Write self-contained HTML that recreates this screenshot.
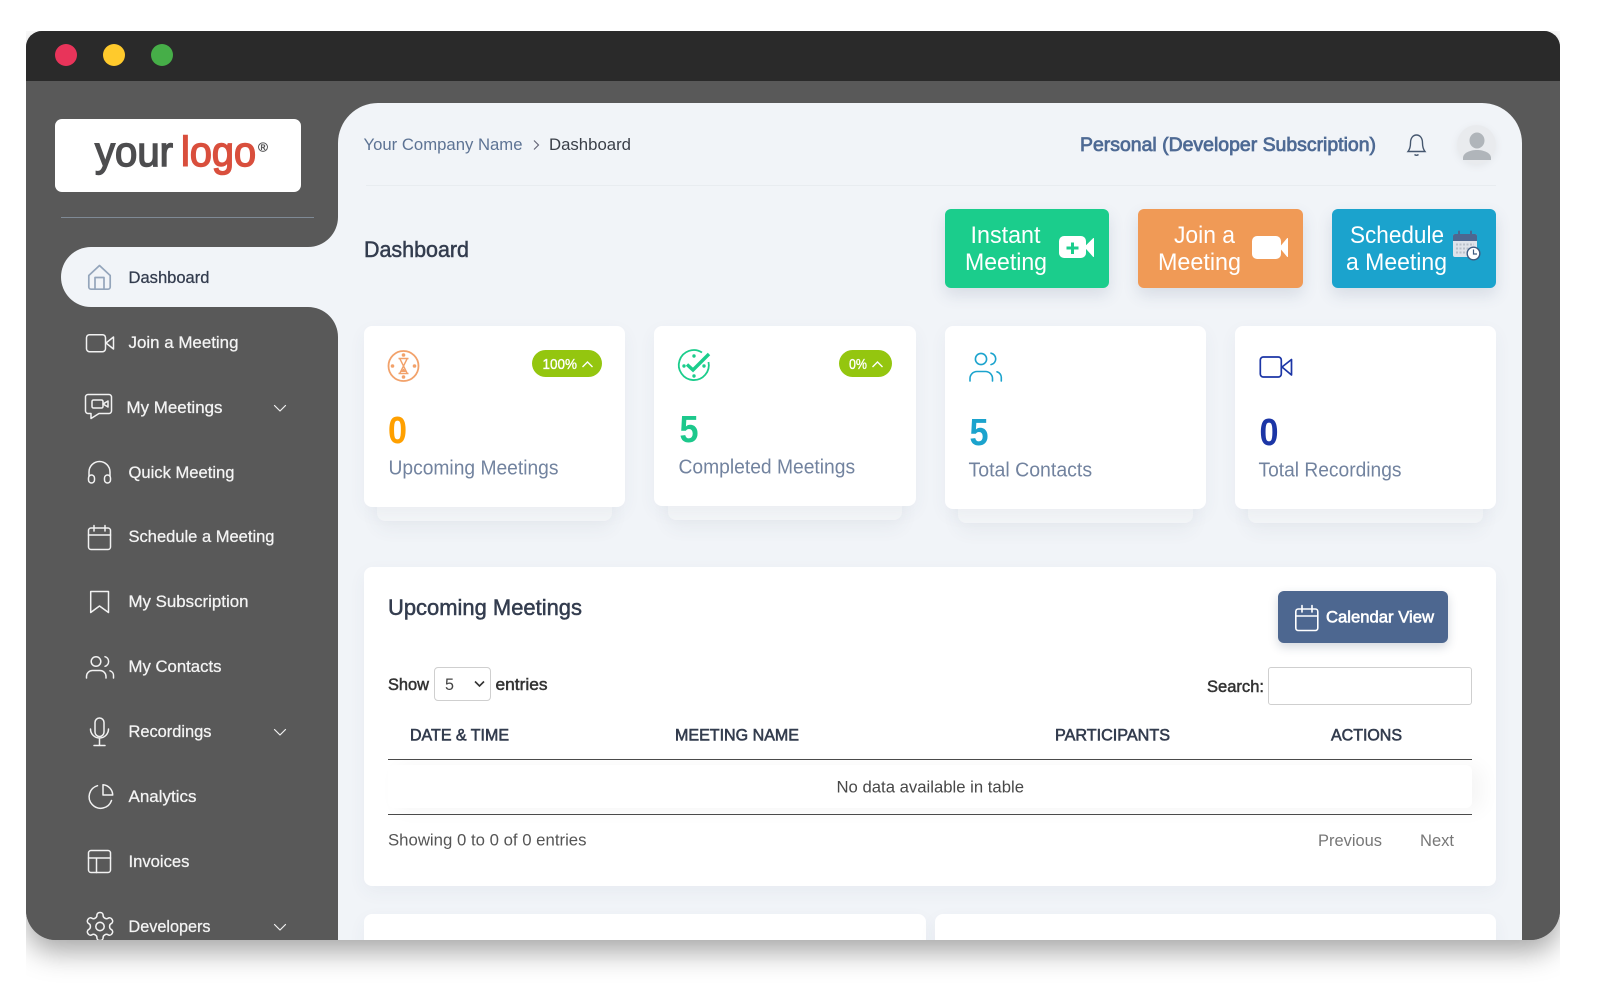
<!DOCTYPE html>
<html lang="en">
<head>
<meta charset="utf-8">
<title>Dashboard</title>
<style>
html,body{margin:0;padding:0;width:1600px;height:1000px;background:#fff;overflow:hidden}
.clip{position:absolute;left:26px;top:31px;width:1534px;height:969px;overflow:hidden}
.win{position:absolute;left:0;top:0;width:1534px;height:909px;background:#595959;border-radius:16px 16px 30px 30px;box-shadow:0 12px 28px rgba(0,0,0,.35)}
.clipwin{position:absolute;left:26px;top:31px;width:1534px;height:909px;overflow:hidden;border-radius:16px 16px 30px 30px}
.in{position:absolute;left:-26px;top:-31px;width:1600px;height:1000px;filter:blur(.3px)}
.b{position:absolute;box-sizing:border-box}
.card{background:#fff;border-radius:8px;box-shadow:0 6px 18px rgba(60,80,110,.05)}
.layer{background:#f4f6f8;border-radius:8px;box-shadow:0 8px 18px rgba(60,80,110,.06)}
.btn{border-radius:6px;box-shadow:0 7px 16px rgba(60,80,110,.14)}
svg{position:absolute;left:0;top:0}
text{font-family:"Liberation Sans",sans-serif;white-space:pre}
.nav{font-size:16.5px;fill:#f4f4f4;stroke:#f4f4f4;stroke-width:.25}
.lab{font-size:20px;fill:#72839f}
.big{font-size:38px;font-weight:700}
.btxt{font-size:24px;fill:#fff}
.th{font-size:16.5px;fill:#333c4e;stroke:#333c4e;stroke-width:.6}
.bd{font-size:16.5px;fill:#333;stroke:#333;stroke-width:.5}
.i{fill:none;stroke:#f2f2f2;stroke-width:1.5;stroke-linecap:round;stroke-linejoin:round}
</style>
</head>
<body>
<div class="clip"><div class="win"></div></div>
<div class="clipwin"><div class="in">
  <div class="b" style="left:0;top:0;width:1600px;height:1000px;background:#595959"></div>
  <div class="b" style="left:0;top:0;width:1600px;height:81px;background:#2a2a2a"></div>
  <div class="b" style="left:54.5px;top:43.5px;width:22px;height:22px;border-radius:50%;background:#e8345a"></div>
  <div class="b" style="left:102.5px;top:43.5px;width:22px;height:22px;border-radius:50%;background:#ffca2c"></div>
  <div class="b" style="left:150.5px;top:43.5px;width:22px;height:22px;border-radius:50%;background:#46ae48"></div>

  <div class="b" style="left:55px;top:119px;width:246px;height:73px;background:#fff;border-radius:7px"></div>
  <div class="b" style="left:61px;top:217px;width:253px;height:1px;background:#7f8a96"></div>

  <div class="b" style="left:338px;top:103px;width:1184px;height:900px;background:#f1f4f8;border-radius:40px 40px 0 0"></div>
  <div class="b" style="left:61px;top:247px;width:290px;height:60px;background:#f1f4f8;border-radius:30px 0 0 30px"></div>

  <div class="b" style="left:366px;top:185px;width:1130px;height:1px;background:#e8ecf0"></div>

  <div class="b btn" style="left:945px;top:209px;width:164px;height:79px;background:#1bcd8c"></div>
  <div class="b btn" style="left:1138px;top:209px;width:165px;height:79px;background:#f09a56"></div>
  <div class="b btn" style="left:1332px;top:209px;width:164px;height:79px;background:#1ba3cd"></div>

  <div class="b layer" style="left:377px;top:490px;width:235px;height:31px"></div>
  <div class="b card" style="left:364px;top:326px;width:261px;height:181px"></div>
  <div class="b layer" style="left:668px;top:490px;width:234px;height:30px"></div>
  <div class="b card" style="left:654px;top:326px;width:262px;height:180px"></div>
  <div class="b layer" style="left:958px;top:490px;width:235px;height:33px"></div>
  <div class="b card" style="left:945px;top:326px;width:261px;height:183px"></div>
  <div class="b layer" style="left:1248px;top:490px;width:235px;height:33px"></div>
  <div class="b card" style="left:1235px;top:326px;width:261px;height:183px"></div>
  <div class="b" style="left:532px;top:350px;width:70px;height:27px;background:#94c60f;border-radius:14px"></div>
  <div class="b" style="left:839px;top:350px;width:53px;height:27px;background:#94c60f;border-radius:14px"></div>

  <div class="b card" style="left:364px;top:567px;width:1132px;height:319px"></div>
  <div class="b" style="left:1278px;top:591px;width:170px;height:52px;background:#4d6790;border-radius:6px;box-shadow:0 4px 10px rgba(40,60,90,.2)"></div>
  <div class="b" style="left:434px;top:667px;width:57px;height:34px;border:1.5px solid #cfcfcf;border-radius:4px;background:#fff"></div>
  <div class="b" style="left:1268px;top:667px;width:204px;height:38px;border:1.5px solid #cfcfcf;border-radius:3px;background:#fff"></div>
  <div class="b" style="left:388px;top:765px;width:1084px;height:43px;background:#fff;border-radius:6px;box-shadow:10px 2px 20px rgba(0,0,0,.045)"></div>
  <div class="b" style="left:388px;top:758.5px;width:1084px;height:1.5px;background:#4a4a4a"></div>
  <div class="b" style="left:388px;top:813.5px;width:1084px;height:1.5px;background:#4a4a4a"></div>

  <div class="b card" style="left:364px;top:914px;width:562px;height:90px"></div>
  <div class="b card" style="left:935px;top:914px;width:561px;height:90px"></div>

  <svg width="1600" height="1000" viewBox="0 0 1600 1000" xmlns="http://www.w3.org/2000/svg">
    <path d="M338 217A30 30 0 0 1 308 247H338Z" fill="#f1f4f8"/>
    <path d="M308 307A30 30 0 0 1 338 337V307Z" fill="#f1f4f8"/>

    <!-- logo -->
    <text x="95" y="166" font-size="42" fill="#4d4d4f" stroke="#4d4d4f" stroke-width="1.5" textLength="78" lengthAdjust="spacingAndGlyphs">your</text>
    <text x="181" y="166" font-size="42" fill="#d94f3d" stroke="#d94f3d" stroke-width="1.5" textLength="75" lengthAdjust="spacingAndGlyphs">logo</text>
    <text x="258" y="151.5" font-size="13" fill="#4d4d4f" stroke="#4d4d4f" stroke-width=".3" textLength="10" lengthAdjust="spacingAndGlyphs">®</text>

    <!-- nav text -->
    <text x="128.5" y="283" class="nav" style="fill:#333c4e;stroke:#333c4e" textLength="81" lengthAdjust="spacingAndGlyphs">Dashboard</text>
    <text x="128.5" y="348" class="nav" textLength="110" lengthAdjust="spacingAndGlyphs">Join a Meeting</text>
    <text x="126.5" y="413" class="nav" textLength="96" lengthAdjust="spacingAndGlyphs">My Meetings</text>
    <text x="128.5" y="478" class="nav" textLength="106" lengthAdjust="spacingAndGlyphs">Quick Meeting</text>
    <text x="128.5" y="542" class="nav" textLength="146" lengthAdjust="spacingAndGlyphs">Schedule a Meeting</text>
    <text x="128.5" y="607" class="nav" textLength="120" lengthAdjust="spacingAndGlyphs">My Subscription</text>
    <text x="128.5" y="672" class="nav" textLength="93" lengthAdjust="spacingAndGlyphs">My Contacts</text>
    <text x="128.5" y="737" class="nav" textLength="83" lengthAdjust="spacingAndGlyphs">Recordings</text>
    <text x="128.5" y="802" class="nav" textLength="68" lengthAdjust="spacingAndGlyphs">Analytics</text>
    <text x="128.5" y="867" class="nav" textLength="61" lengthAdjust="spacingAndGlyphs">Invoices</text>
    <text x="128.5" y="932" class="nav" textLength="82" lengthAdjust="spacingAndGlyphs">Developers</text>

    <!-- nav icons -->
    <g class="i" style="stroke:#94a5bb;stroke-width:1.7">
      <path d="M88.8 275.5L99.5 265.5L110.2 275.5V287a2.2 2.2 0 0 1-2.2 2.2H91a2.2 2.2 0 0 1-2.2-2.2Z"/>
      <path d="M95 289V277.5H104V289"/>
    </g>
    <g class="i">
      <rect x="86.5" y="334.7" width="19" height="17" rx="3"/>
      <path d="M106 343L113.5 337V349Z"/>
      <path d="M88 394.5H109a2.5 2.5 0 0 1 2.5 2.5V411a2.5 2.5 0 0 1-2.5 2.5H99L91 418.5V413.5H88a2.5 2.5 0 0 1-2.5-2.5V397a2.5 2.5 0 0 1 2.5-2.5Z"/>
      <rect x="92" y="400" width="11" height="8" rx="1.5"/>
      <path d="M103 404L108 401V407Z"/>
      <path d="M89 476V472a10.5 10.5 0 0 1 21 0V476"/>
      <rect x="88.5" y="475" width="6" height="8" rx="3"/>
      <rect x="104.5" y="475" width="6" height="8" rx="3"/>
      <rect x="88.5" y="528" width="22" height="21.5" rx="2.5"/>
      <path d="M88.5 535H110.5M94 525.5V531M105 525.5V531"/>
      <path d="M90.7 591.5H108.5V612.5L99.5 606L90.7 612.5Z"/>
      <circle cx="96" cy="661.5" r="4.8"/>
      <path d="M105 656.7a5 5 0 0 1 0 9.6"/>
      <path d="M86.5 678V676.5a6 6 0 0 1 6-6H100a6 6 0 0 1 6 6V678"/>
      <path d="M110 670.8a5 5 0 0 1 3.5 5V678"/>
      <rect x="95" y="718" width="9" height="18.5" rx="4.5"/>
      <path d="M90.5 729a9 9 0 0 0 18 0M99.5 738V745.5M94 745.5H105"/>
      <path d="M103 784.7V795H112.7A10.5 10.5 0 0 0 103 784.7Z"/>
      <path d="M97.5 785.7A11.5 11.5 0 1 0 111.5 800.5"/>
      <rect x="88.5" y="850.5" width="22" height="22" rx="2.5"/>
      <path d="M88.5 858H110.5M96.5 858V872.5"/>
      <g transform="translate(83.2 909.7) scale(1.4)" style="stroke-width:1.1">
        <path d="M12.22 2h-.44a2 2 0 0 0-2 2v.18a2 2 0 0 1-1 1.73l-.43.25a2 2 0 0 1-2 0l-.15-.08a2 2 0 0 0-2.73.73l-.22.38a2 2 0 0 0 .73 2.73l.15.1a2 2 0 0 1 1 1.72v.51a2 2 0 0 1-1 1.74l-.15.09a2 2 0 0 0-.73 2.73l.22.38a2 2 0 0 0 2.73.73l.15-.08a2 2 0 0 1 2 0l.43.25a2 2 0 0 1 1 1.73V20a2 2 0 0 0 2 2h.44a2 2 0 0 0 2-2v-.18a2 2 0 0 1 1-1.73l.43-.25a2 2 0 0 1 2 0l.15.08a2 2 0 0 0 2.73-.73l.22-.39a2 2 0 0 0-.73-2.73l-.15-.08a2 2 0 0 1-1-1.74v-.5a2 2 0 0 1 1-1.74l.15-.09a2 2 0 0 0 .73-2.73l-.22-.38a2 2 0 0 0-2.73-.73l-.15.08a2 2 0 0 1-2 0l-.43-.25a2 2 0 0 1-1-1.73V4a2 2 0 0 0-2-2z"/>
        <circle cx="12" cy="12" r="3"/>
      </g>
      <path d="M274.5 405.5L280 411L285.5 405.5" style="stroke-width:1.2"/>
      <path d="M274.5 729.5L280 735L285.5 729.5" style="stroke-width:1.2"/>
      <path d="M274.5 924.5L280 930L285.5 924.5" style="stroke-width:1.2"/>
    </g>

    <!-- header -->
    <text x="363.5" y="150" font-size="16.5" fill="#5d7394" textLength="159" lengthAdjust="spacingAndGlyphs">Your Company Name</text>
    <path d="M534 140.5L538.5 145L534 149.5" fill="none" stroke="#667" stroke-width="1.2"/>
    <text x="549" y="150" font-size="16.5" fill="#3a3f48" textLength="82" lengthAdjust="spacingAndGlyphs">Dashboard</text>
    <text x="1080" y="151" font-size="19" fill="#4e6a94" stroke="#4e6a94" stroke-width=".75" textLength="296" lengthAdjust="spacingAndGlyphs">Personal (Developer Subscription)</text>
    <path d="M1408 151.5H1425C1423 149 1422.5 147 1422.5 143C1422.5 138 1420 135 1416.5 135C1413 135 1410.5 138 1410.5 143C1410.5 147 1410 149 1408 151.5Z" fill="none" stroke="#45566e" stroke-width="1.4"/>
    <path d="M1414.5 154.5a2.5 2 0 0 0 4 0" fill="none" stroke="#45566e" stroke-width="1.4"/>
    <circle cx="1476.5" cy="144.5" r="19.5" fill="#e9ebee" style="filter:drop-shadow(0 2px 4px rgba(0,0,0,.06))"/>
    <ellipse cx="1477" cy="140.5" rx="7.5" ry="8" fill="#b0b5ba"/>
    <path d="M1463 160v-2c0-5 7-8 14-8s14 3 14 8v2Z" fill="#b0b5ba"/>

    <text x="364" y="257" font-size="22" fill="#333c4e" stroke="#333c4e" stroke-width=".5" textLength="105" lengthAdjust="spacingAndGlyphs">Dashboard</text>

    <!-- action buttons -->
    <text x="970.5" y="243" class="btxt" textLength="70" lengthAdjust="spacingAndGlyphs">Instant</text>
    <text x="965" y="270" class="btxt" textLength="82" lengthAdjust="spacingAndGlyphs">Meeting</text>
    <rect x="1059" y="236" width="27" height="22" rx="5" fill="#fff"/>
    <path d="M1085 247L1093.5 238.5V256.5Z" fill="#fff" stroke="#fff" stroke-linejoin="round"/>
    <path d="M1066.5 248H1078.5M1072.5 242.5V254" stroke="#1bcd8c" stroke-width="3"/>

    <text x="1174" y="243" class="btxt" textLength="61" lengthAdjust="spacingAndGlyphs">Join a</text>
    <text x="1158" y="270" class="btxt" textLength="83" lengthAdjust="spacingAndGlyphs">Meeting</text>
    <rect x="1252" y="236" width="29" height="23" rx="5" fill="#fff"/>
    <path d="M1280 247.5L1287.5 238.5V256.5Z" fill="#fff" stroke="#fff" stroke-linejoin="round"/>

    <text x="1350" y="243" class="btxt" textLength="94" lengthAdjust="spacingAndGlyphs">Schedule</text>
    <text x="1346" y="270" class="btxt" textLength="101" lengthAdjust="spacingAndGlyphs">a Meeting</text>
    <rect x="1453" y="234" width="24" height="23" rx="2" fill="#dfe3ea"/>
    <path d="M1453 236a2 2 0 0 1 2-2H1475a2 2 0 0 1 2 2V241H1453Z" fill="#4d6790"/>
    <path d="M1459 231.5V237M1471 231.5V237" stroke="#4d6790" stroke-width="2" stroke-linecap="round"/>
    <path d="M1456 244.5H1474M1456 248.5H1474M1456 252.5H1468" stroke="#b9c0ca" stroke-width="2" stroke-dasharray="2 1.5"/>
    <circle cx="1473.5" cy="253.5" r="6.3" fill="#fff" stroke="#3d5a80" stroke-width="1.4"/>
    <path d="M1473.5 249.5V254H1477" fill="none" stroke="#3d5a80" stroke-width="1.2"/>

    <!-- card 1 -->
    <circle cx="403.5" cy="366" r="15" fill="none" stroke="#f2a26b" stroke-width="1.8"/>
    <g fill="#f2a26b"><circle cx="403.5" cy="355" r="1.8"/><circle cx="403.5" cy="377" r="1.8"/><circle cx="392.5" cy="366" r="1.8"/><circle cx="414.5" cy="366" r="1.8"/></g>
    <path d="M398.5 358.5H408.5M398.5 373.5H408.5M400 359L403.5 366L400 373M407 359L403.5 366L407 373" fill="none" stroke="#f2a26b" stroke-width="1.4"/>
    <path d="M400.5 372L403.5 368.5L406.5 372Z" fill="#f2a26b"/>
    <text x="542.5" y="369" font-size="14.5" fill="#fff" stroke="#fff" stroke-width=".35" textLength="34.5" lengthAdjust="spacingAndGlyphs">100%</text>
    <path d="M582.5 367L587.5 362L592.5 367" fill="none" stroke="#fff" stroke-width="1.4"/>
    <text x="388" y="443" class="big" fill="#ffa000" textLength="19" lengthAdjust="spacingAndGlyphs">0</text>
    <text x="388.5" y="474.5" class="lab" textLength="170" lengthAdjust="spacingAndGlyphs">Upcoming Meetings</text>

    <!-- card 2 -->
    <path d="M702 352.5A15 15 0 1 0 708.5 362" fill="none" stroke="#1bcd8c" stroke-width="1.8"/>
    <g fill="#1bcd8c"><circle cx="694" cy="356" r="1.7"/><circle cx="694" cy="376" r="1.7"/><circle cx="684" cy="366" r="1.7"/><circle cx="704" cy="366" r="1.7"/></g>
    <path d="M687 364.5L693 370L709 354" fill="none" stroke="#1bcd8c" stroke-width="3.4"/>
    <text x="849" y="369" font-size="14.5" fill="#fff" stroke="#fff" stroke-width=".35" textLength="18" lengthAdjust="spacingAndGlyphs">0%</text>
    <path d="M872.5 367L877.5 362L882.5 367" fill="none" stroke="#fff" stroke-width="1.4"/>
    <text x="679.5" y="442" class="big" fill="#1dc88c" textLength="19" lengthAdjust="spacingAndGlyphs">5</text>
    <text x="678.5" y="473.5" class="lab" textLength="176.6" lengthAdjust="spacingAndGlyphs">Completed Meetings</text>

    <!-- card 3 -->
    <g fill="none" stroke="#1ba3cd" stroke-width="1.6" stroke-linecap="round">
      <circle cx="981" cy="359" r="5.6"/>
      <path d="M991 353.2a5.8 5.8 0 0 1 0 11.4"/>
      <path d="M970 381V378.5a7 7 0 0 1 7-7H985.5a7 7 0 0 1 7 7V381"/>
      <path d="M997 371.8a5.8 5.8 0 0 1 4.3 5.5V381"/>
    </g>
    <text x="969.5" y="445" class="big" fill="#1ba3cd" textLength="19" lengthAdjust="spacingAndGlyphs">5</text>
    <text x="968.5" y="476.5" class="lab" textLength="123.6" lengthAdjust="spacingAndGlyphs">Total Contacts</text>

    <!-- card 4 -->
    <rect x="1260.3" y="357" width="21" height="20" rx="3" fill="none" stroke="#1c36a6" stroke-width="1.7"/>
    <path d="M1282 367L1291.5 359.5V375Z" fill="none" stroke="#1c36a6" stroke-width="1.7" stroke-linejoin="round"/>
    <text x="1259.5" y="445" class="big" fill="#1c36a6" textLength="19" lengthAdjust="spacingAndGlyphs">0</text>
    <text x="1258.5" y="476.5" class="lab" textLength="143" lengthAdjust="spacingAndGlyphs">Total Recordings</text>

    <!-- upcoming panel -->
    <text x="388" y="615" font-size="22" fill="#333c4e" stroke="#333c4e" stroke-width=".5" textLength="194" lengthAdjust="spacingAndGlyphs">Upcoming Meetings</text>
    <g fill="none" stroke="#fff" stroke-width="1.6" stroke-linecap="round">
      <rect x="1295.8" y="609" width="22" height="21.5" rx="2.5"/>
      <path d="M1295.8 616H1317.8M1302 605.5V612M1312 605.5V612"/>
    </g>
    <text x="1326" y="622.5" font-size="17" fill="#fff" stroke="#fff" stroke-width=".6" textLength="108" lengthAdjust="spacingAndGlyphs">Calendar View</text>

    <text x="388" y="690" class="bd" textLength="41" lengthAdjust="spacingAndGlyphs">Show</text>
    <text x="445" y="690" font-size="16.5" fill="#444" textLength="9" lengthAdjust="spacingAndGlyphs">5</text>
    <path d="M475 681.5L479.5 686L484 681.5" fill="none" stroke="#333" stroke-width="1.6"/>
    <text x="495.5" y="690" class="bd" textLength="52" lengthAdjust="spacingAndGlyphs">entries</text>
    <text x="1207" y="692" class="bd" textLength="57" lengthAdjust="spacingAndGlyphs">Search:</text>

    <text x="410" y="740.5" class="th" textLength="99" lengthAdjust="spacingAndGlyphs">DATE &amp; TIME</text>
    <text x="675" y="740.5" class="th" textLength="124" lengthAdjust="spacingAndGlyphs">MEETING NAME</text>
    <text x="1055" y="740.5" class="th" textLength="115" lengthAdjust="spacingAndGlyphs">PARTICIPANTS</text>
    <text x="1331" y="740.5" class="th" textLength="71" lengthAdjust="spacingAndGlyphs">ACTIONS</text>

    <text x="836.5" y="792.7" font-size="16.5" fill="#484848" textLength="187.5" lengthAdjust="spacingAndGlyphs">No data available in table</text>
    <text x="388" y="845.7" font-size="16.5" fill="#555" textLength="198.5" lengthAdjust="spacingAndGlyphs">Showing 0 to 0 of 0 entries</text>
    <text x="1318" y="846" font-size="16.5" fill="#777" textLength="64" lengthAdjust="spacingAndGlyphs">Previous</text>
    <text x="1420" y="846" font-size="16.5" fill="#777" textLength="34" lengthAdjust="spacingAndGlyphs">Next</text>
  </svg>
</div></div>
</body>
</html>
